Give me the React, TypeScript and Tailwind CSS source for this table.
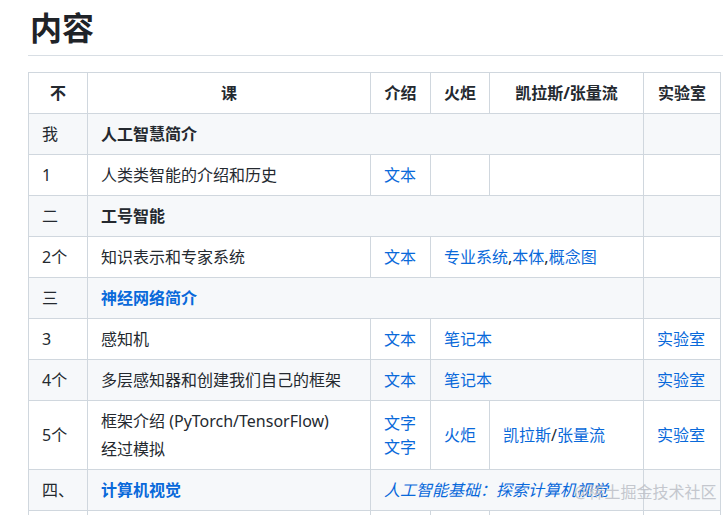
import React from "react";

const td = "border border-[#d0d7de] px-[13px] py-[6px] align-middle text-left";
const th = "border border-[#d0d7de] px-[13px] py-[6px] text-center font-bold";
const link = "text-[#0969da]";

function Sep({ c }: { c: string }) {
  return <span className="text-[#24292f]">{c}</span>;
}

export default function App() {
  return (
    <div
      className="relative min-h-[515px] overflow-hidden bg-white pl-[28px] text-[#24292f]"
      style={{ fontFamily: '"Noto Sans", "Noto Sans CJK SC", sans-serif' }}
    >
      <h2 className="border-b border-[#d8dee4] pt-[8px] pb-[7px] pl-[2px] text-[32px] font-bold leading-[40px] text-[#1f2328]">
        内容
      </h2>

      <table className="mt-[16px] w-[692px] table-fixed border-collapse text-[16px] leading-[28px]">
        <colgroup>
          <col className="w-[59px]" />
          <col className="w-[283px]" />
          <col className="w-[60px]" />
          <col className="w-[59px]" />
          <col className="w-[154px]" />
          <col className="w-[77px]" />
        </colgroup>
        <thead>
          <tr className="bg-white">
            <th className={th}>不</th>
            <th className={th}>课</th>
            <th className={th}>介绍</th>
            <th className={th}>火炬</th>
            <th className={th}>凯拉斯/张量流</th>
            <th className={th}>实验室</th>
          </tr>
        </thead>
        <tbody>
          <tr className="bg-[#f6f8fa]">
            <td className={td}>我</td>
            <td className={`${td} font-bold`} colSpan={4}>人工智慧简介</td>
            <td className={td}></td>
          </tr>
          <tr className="bg-white">
            <td className={td}>1</td>
            <td className={td}>人类类智能的介绍和历史</td>
            <td className={td}><span className={link}>文本</span></td>
            <td className={td}></td>
            <td className={td}></td>
            <td className={td}></td>
          </tr>
          <tr className="bg-[#f6f8fa]">
            <td className={td}>二</td>
            <td className={`${td} font-bold`} colSpan={4}>工号智能</td>
            <td className={td}></td>
          </tr>
          <tr className="bg-white">
            <td className={td}>2个</td>
            <td className={td}>知识表示和专家系统</td>
            <td className={td}><span className={link}>文本</span></td>
            <td className={td} colSpan={2}>
              <span className={link}>专业系统</span>
              <Sep c="," />
              <span className={link}>本体</span>
              <Sep c="," />
              <span className={link}>概念图</span>
            </td>
            <td className={td}></td>
          </tr>
          <tr className="bg-[#f6f8fa]">
            <td className={td}>三</td>
            <td className={`${td} font-bold`} colSpan={4}>
              <span className={link}>神经网络简介</span>
            </td>
            <td className={td}></td>
          </tr>
          <tr className="bg-white">
            <td className={td}>3</td>
            <td className={td}>感知机</td>
            <td className={td}><span className={link}>文本</span></td>
            <td className={td} colSpan={2}><span className={link}>笔记本</span></td>
            <td className={td}><span className={link}>实验室</span></td>
          </tr>
          <tr className="bg-[#f6f8fa]">
            <td className={td}>4个</td>
            <td className={td}>多层感知器和创建我们自己的框架</td>
            <td className={td}><span className={link}>文本</span></td>
            <td className={td} colSpan={2}><span className={link}>笔记本</span></td>
            <td className={td}><span className={link}>实验室</span></td>
          </tr>
          <tr className="bg-white">
            <td className={td}>5个</td>
            <td className={td}>
              框架介绍 (PyTorch/TensorFlow)
              <br />
              经过模拟
            </td>
            <td className={`${td} leading-[24px]`}>
              <span className={link}>文字</span>
              <br />
              <span className={link}>文字</span>
            </td>
            <td className={td}><span className={link}>火炬</span></td>
            <td className={td}>
              <span className={link}>凯拉斯</span>
              <Sep c="/" />
              <span className={link}>张量流</span>
            </td>
            <td className={td}><span className={link}>实验室</span></td>
          </tr>
          <tr className="bg-[#f6f8fa]">
            <td className={td}>四、</td>
            <td className={`${td} font-bold`}>
              <span className={link}>计算机视觉</span>
            </td>
            <td className={td} colSpan={3}>
              <span className={`${link} italic`}>人工智能基础：探索计算机视觉</span>
            </td>
            <td className={td}></td>
          </tr>
          <tr className="bg-white">
            <td className={`${td} h-[41px]`}></td>
            <td className={td}></td>
            <td className={td}></td>
            <td className={td}></td>
            <td className={td}></td>
            <td className={td}></td>
          </tr>
        </tbody>
      </table>

      {/* 水印 */}
      <div className="pointer-events-none absolute left-[574px] top-[480px] text-[16px] leading-[24px] text-[#b8bcc4] opacity-80">
        @稀土掘金技术社区
      </div>
    </div>
  );
}
